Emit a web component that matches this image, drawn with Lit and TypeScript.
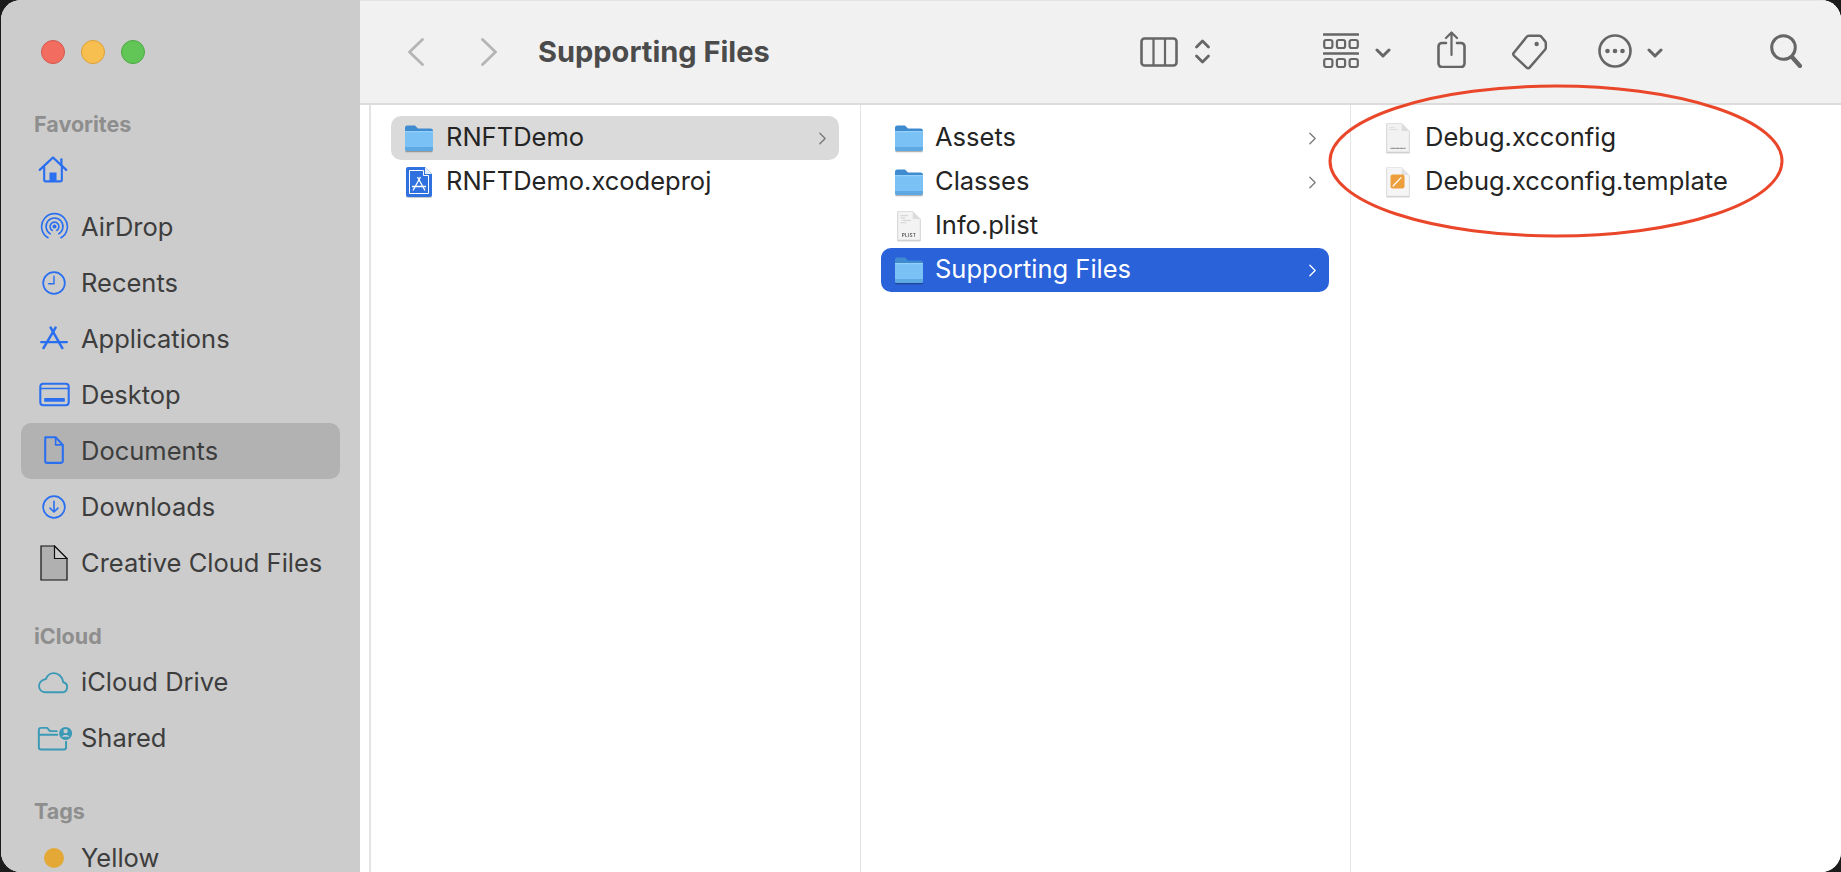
import { LitElement, html, css, svg } from "lit";
import { customElement } from "lit/decorators.js";

const sym = (body: unknown, vb: string, cls = "ic") => html`<svg class=${cls} viewBox=${vb} fill="none" stroke="currentColor" stroke-width="2.4" stroke-linecap="round" stroke-linejoin="round">${body}</svg>`;

const sideIcons: Record<string, unknown> = {
  home: sym(svg`<path d="M3 18 18 4l15 14" stroke-width="2.6"/><path d="M27.5 6v7" stroke-width="2.6"/><path d="M8 15v14.5a1.5 1.5 0 0 0 1.5 1.5h17a1.5 1.5 0 0 0 1.5-1.5V15" stroke-width="2.4"/><rect x="14" y="21" width="8" height="10" fill="currentColor" stroke="none"/>`, "0 0 36 34", "ic home"),
  airdrop: sym(svg`<circle cx="18" cy="18" r="2.5" fill="currentColor" stroke="none"/><path d="M15.25 22.8A5.5 5.5 0 1 1 20.75 22.8" stroke-width="2"/><path d="M12.75 27.1A10.5 10.5 0 1 1 23.25 27.1" stroke-width="2"/><path d="M10 31.9A16 16 0 1 1 26 31.9" stroke-width="2"/>`, "0 0 36 36", "ic airdrop"),
  clock: sym(svg`<circle cx="18" cy="18" r="15"/><path d="M18 8.5V19h-7.5" stroke-width="2"/>`, "0 0 36 36", "ic"),
  apps: sym(svg`<path d="M13.7 2 28.7 28.3" stroke-width="3.2"/><path d="M20 2 4.500 28.300" stroke-width="3.2"/><path d="M1.500 20.600h33" stroke-width="3"/>`, "0 0 36 32", "ic apps"),
  desktop: sym(svg`<rect x="1.5" y="1.5" width="33" height="25" rx="3.5"/><path d="M2 7h32" stroke-width="1.8"/><rect x="6" y="18" width="24" height="4.5" rx="1" fill="currentColor" stroke="none"/>`, "0 0 36 28", "ic desk"),
  doc: sym(svg`<path d="M4 1.5h13L26 11v20a2.5 2.5 0 0 1-2.5 2.5h-17A2.5 2.5 0 0 1 4 31V4a2.5 2.5 0 0 1 2.5-2.5z" stroke-width="2.6"/><path d="M17 2v9h8.5" stroke-width="2"/>`, "0 0 30 36", "ic docu"),
  down: sym(svg`<circle cx="18" cy="18" r="15"/><path d="M18 10v15M12.5 19.5 18 25l5.5-5.5" stroke-width="2.2"/>`, "0 0 36 36", "ic"),
  cloud: sym(svg`<path d="M10 25h19a6 6 0 0 0 1.500-11.800C29.500 6.500 24.500 2.500 19.500 2.500c-4.500 0-8 3-9.500 7C5.500 10 2 13.500 2 17.500 2 22 5.500 25 10 25z" stroke-width="2.200"/>`, "0 0 38 27", "ic cloud"),
  shared: sym(svg`<path d="M2 10V4.500A2.500 2.500 0 0 1 4.500 2H11l3 3.500h7.500M2 9.500h20M2 9.500V23a2.500 2.500 0 0 0 2.500 2.500H29a2.500 2.500 0 0 0 2.500-2.500v-6" stroke-width="2.100"/><circle cx="31" cy="8" r="7" fill="currentColor" stroke="none"/><circle cx="31" cy="5.500" r="2.400" fill="#ccc" stroke="none"/><path d="M26.800 11.500c1-2.300 7.400-2.300 8.400 0z" fill="#ccc" stroke="none"/>`, "0 0 39 27", "ic shared"),
  generic: html`<svg class="ic gen" viewBox="0 0 28 36"><path d="M1 1h13.500L27 13.500V35H1z" fill="#b0b0b0" stroke="#111" stroke-width="1.200"/><path d="M14.500 1v12.500H27z" fill="#ccc" stroke="#111" stroke-width="1.200"/></svg>`,
  dot: html`<span class="dot"></span>`,
};

const folder = html`<svg class="fi folder" viewBox="0 0 30 30">
  <path d="M1 5a2.500 2.500 0 0 1 2.500-2.500h7.500l3 3h12.500A2.500 2.500 0 0 1 29 8v6H1z" fill="#3f8bd0"/>
  <path d="M1 8.500h28V26a2 2 0 0 1-2 2H3a2 2 0 0 1-2-2z" fill="#7ac1f6"/>
  <path d="M1 24h28v2a2 2 0 0 1-2 2H3a2 2 0 0 1-2-2z" fill="#5ea9e2"/>
  <path d="M1 8h28v1.200H1z" fill="#94d0fa"/>
  <path d="M1.500 28.800h27" stroke="#000" stroke-opacity=".18" stroke-width="1"/>
</svg>`;

const xcode = html`<svg class="fi" viewBox="0 0 28 30">
  <path d="M3 0h17l7 7v21a2 2 0 0 1-2 2H3a2 2 0 0 1-2-2V2a2 2 0 0 1 2-2z" fill="#2f71de"/>
  <path d="M20 0l7 7h-7z" fill="#e3eefb"/>
  <path d="M4.500 3.500h14v5h5v18h-19z" fill="none" stroke="#fff" stroke-width="1"/>
  <path d="M12.500 10 20 23.500M15.500 10 8 23.500M7 19.500h14" stroke="#fff" stroke-width="1.300" fill="none"/>
</svg>`;

const plist = html`<svg class="fi" viewBox="0 0 26 32">
  <path d="M1 .5h16l8 8V31H1z" fill="#f3f3f3" stroke="#d4d4d4" stroke-width=".8"/>
  <path d="M17 .5v8h8z" fill="#dcdcdc"/>
  <path d="M4 5h8M4 7.500h5M6 10h9M4 12.500h6" stroke="#cfcfcf" stroke-width="1"/>
  <text x="13" y="28" font-size="5" font-family="Inter,sans-serif" font-weight="600" fill="#555" text-anchor="middle" letter-spacing=".3">PLIST</text>
</svg>`;

const xcconfig = html`<svg class="fi" viewBox="0 0 26 32">
  <path d="M1 .5h16l8 8V31H1z" fill="#f2f2f2" stroke="#d6d6d6" stroke-width=".8"/>
  <path d="M17 .5v8h8z" fill="#dcdcdc"/>
  <path d="M3.500 5h6M3.500 7h9" stroke="#dcdcdc" stroke-width="1"/>
  <path d="M5 27h16" stroke="#7b7b7b" stroke-width="1.300" stroke-dasharray="1 .4"/>
</svg>`;

const pages = html`<svg class="fi" viewBox="0 0 26 32">
  <path d="M1 .5h16l8 8V31H1z" fill="#f5f5f5" stroke="#dedede" stroke-width=".8"/>
  <path d="M17 .5v8h8z" fill="#e2e2e2"/>
  <rect x="5" y="8" width="15" height="15" rx="2.500" fill="#ee9f3d"/>
  <path d="M7.500 20.500 16.500 11" stroke="#fff" stroke-width="1.300"/>
</svg>`;

const chev = html`<svg class="chev" viewBox="0 0 8 14" fill="none" stroke="currentColor" stroke-width="1.500" stroke-linecap="round" stroke-linejoin="round"><path d="M1 1l6 6-6 6"/></svg>`;

const tb = (body: unknown, cls: string, vb: string) => html`<svg class=${cls} viewBox=${vb} fill="none" stroke="#666" stroke-width="2.600" stroke-linecap="round" stroke-linejoin="round">${body}</svg>`;

type Row = { icon: string; label: string };
const sections: { title: string; rows: Row[] }[] = [
  { title: "Favorites", rows: [
    { icon: "home", label: "" }, { icon: "airdrop", label: "AirDrop" }, { icon: "clock", label: "Recents" },
    { icon: "apps", label: "Applications" }, { icon: "desktop", label: "Desktop" }, { icon: "doc", label: "Documents" },
    { icon: "down", label: "Downloads" }, { icon: "generic", label: "Creative Cloud Files" } ] },
  { title: "iCloud", rows: [ { icon: "cloud", label: "iCloud Drive" }, { icon: "shared", label: "Shared" } ] },
  { title: "Tags", rows: [ { icon: "dot", label: "Yellow" } ] },
];

type FileRow = { icon: unknown; label: string; arrow?: boolean; state?: string };
const columns: FileRow[][] = [
  [ { icon: folder, label: "RNFTDemo", arrow: true, state: "inactive" }, { icon: xcode, label: "RNFTDemo.xcodeproj" } ],
  [ { icon: folder, label: "Assets", arrow: true }, { icon: folder, label: "Classes", arrow: true },
    { icon: plist, label: "Info.plist" }, { icon: folder, label: "Supporting Files", arrow: true, state: "active" } ],
  [ { icon: xcconfig, label: "Debug.xcconfig" }, { icon: pages, label: "Debug.xcconfig.template" } ],
];

@customElement("app-root")
export class AppRoot extends LitElement {
  static styles = css`
    :host { display: block; width: 1841px; height: 872px; background: #1c1c1c; overflow: hidden; font-family: Inter, "Liberation Sans", sans-serif; }
    .win { position: relative; margin-left: 1px; width: 1840px; height: 872px; background: #fff; border-radius: 20px; overflow: hidden; display: flex; }
    .side { width: 359px; flex: none; background: #ccc; display: flex; flex-direction: column; overflow: hidden; }
    .lights { height: 104px; flex: none; display: flex; align-items: center; gap: 16px; padding-left: 40px; box-sizing: border-box; }
    .light { width: 24px; height: 24px; border-radius: 50%; box-sizing: border-box; border: 1px solid; }
    .red { background: #f26d60; border-color: #d2574b; }
    .yellow { background: #f7bf4f; border-color: #dc9f38; }
    .green { background: #61c655; border-color: #4ca843; }
    .sec { flex: none; }
    .sec + .sec { margin-top: 25px; }
    .head { height: 38.5px; line-height: 40px; padding-left: 33px; font-size: 21.5px; font-weight: 700; color: #8e8e8e; }
    .srow { height: 56px; display: flex; align-items: center; margin: 0 20px; border-radius: 10px; color: #3d3d3d; font-size: 25.5px; box-sizing: border-box; }
    .srow.sel { background: #b2b2b2; }
    .slabel { white-space: nowrap; line-height: 26px; }
    .sicon { width: 66px; margin-right: -6px; flex: none; display: flex; align-items: center; justify-content: center; color: #2a6ff0; }
    .teal { color: #3a9ab6; }
    .ic { width: 26px; height: 26px; }
    .home { width: 32px; height: 30px; margin: -3px 2px 0 0; }
    .airdrop { width: 29px; height: 29px; }
    .apps { width: 28px; height: 25px; }
    .desk { width: 31px; height: 25px; }
    .docu { width: 24px; height: 29px; }
    .gen { width: 28px; height: 36px; }
    .cloud { width: 33px; height: 23px; margin-left: -1px; }
    .shared { width: 36px; height: 25px; margin-left: 1px; }
    .dot { width: 20px; height: 20px; border-radius: 50%; background: #e4a836; }
    .main { flex: 1; min-width: 0; display: flex; flex-direction: column; background: #fff; }
    .bar { height: 105px; flex: none; box-sizing: border-box; background: #f1f1f1; border-bottom: 2px solid #dcdcdc; border-top: 1px solid #e4e4e4; display: flex; align-items: center; padding-right: 39px; }
    .nav { width: 16px; height: 28px; flex: none; }
    .back { margin-left: 48px; }
    .fwd { margin-left: 57px; }
    .title { margin-left: 41px; font-size: 29px; font-weight: 700; color: #4b4b4b; white-space: nowrap; padding-bottom: 2px; }
    .tools { margin-left: auto; display: flex; align-items: center; }
    .tools svg { flex: none; display: block; }
    .t-col { width: 38px; height: 30px; }
    .t-sort { width: 17px; height: 25px; margin-left: 16px; margin-bottom: 1px; }
    .t-grp { width: 36px; height: 35px; margin-left: 112px; margin-bottom: 4px; }
    .t-dn { width: 16px; height: 10px; margin-left: 16px; margin-top: 1px; }
    .t-share { width: 29px; height: 37px; margin-left: 46px; margin-bottom: 6px; }
    .t-tag { width: 36px; height: 38px; margin-left: 46px; margin-bottom: 1px; }
    .t-more { width: 34px; height: 34px; margin-left: 50px; margin-bottom: 3px; }
    .t-dn2 { margin-left: 15px; width: 16px; height: 10px; margin-top: 1px; }
    .t-find { width: 32px; height: 34px; margin-left: 107px; margin-bottom: 3px; }
    .cols { flex: 1; min-height: 0; display: flex; padding-left: 9px; }
    .col { flex: none; box-sizing: border-box; border-left: 2px solid #e4e4e4; padding: 11px 21px 0 20px; display: flex; flex-direction: column; }
    .c1 { width: 491px; }
    .c2 { width: 490px; border-left-width: 1px; }
    .c3 { width: 491px; border-left-width: 1px; padding-left: 19px; }
    .row { height: 44px; flex: none; display: flex; align-items: center; border-radius: 10px; padding: 0 13px 0 14px; font-size: 25.5px; color: #242424; }
    .row.inactive { background: #dadada; }
    .row.active { background: #2a62da; color: #fff; }
    .fi { width: 28px; height: 30px; flex: none; margin-right: 13px; filter: drop-shadow(0 1px .5px rgba(0,0,0,.2)); }
    .folder { width: 30px; margin-left: -1px; margin-right: 12px; }
    .c2 .fi { margin-right: 12px; }
    .c2 .folder { margin-right: 11px; }
    .fn { flex: 1; white-space: nowrap; padding-bottom: 4px; }
    .chev { width: 7px; height: 13px; color: #777; flex: none; }
    .active .chev { color: #fff; }
    .ring { position: absolute; left: 1327px; top: 84px; width: 456px; height: 154px; pointer-events: none; }
  `;

  render() {
    return html`<div class="win">
      <aside class="side">
        <div class="lights"><span class="light red"></span><span class="light yellow"></span><span class="light green"></span></div>
        ${sections.map((s) => html`<div class="sec">
          <div class="head">${s.title}</div>
          ${s.rows.map((r) => html`<div class="srow ${r.label === "Documents" ? "sel" : ""}">
            <span class="sicon ${r.icon === "cloud" || r.icon === "shared" ? "teal" : ""}">${sideIcons[r.icon]}</span>
            <span class="slabel">${r.label}</span>
          </div>`)}
        </div>`)}
      </aside>
      <main class="main">
        <header class="bar">
          <svg class="nav back" viewBox="0 0 16 28" fill="none" stroke="#b5b5b5" stroke-width="2.800" stroke-linecap="round" stroke-linejoin="round"><path d="M14.500 1.500 1.500 14l13 12.500"/></svg>
          <svg class="nav fwd" viewBox="0 0 16 28" fill="none" stroke="#b5b5b5" stroke-width="2.800" stroke-linecap="round" stroke-linejoin="round"><path d="M1.500 1.500 14.500 14l-13 12.500"/></svg>
          <span class="title">Supporting Files</span>
          <div class="tools">
            ${tb(svg`<rect x="1.500" y="1.500" width="35" height="27" rx="3"/><path d="M13.500 2v26M25 2v26" stroke-width="2.200"/>`, "t-col", "0 0 38 30")}
            ${tb(svg`<path d="M2.500 8 8.500 2l6 6M2.500 17l6 6 6-6" stroke-width="2.800"/>`, "t-sort", "0 0 17 25")}
            ${tb(svg`<path d="M1 1.500h34M1 20.500h34" stroke-width="2.600"/><rect x="1.200" y="7" width="8.200" height="8" rx="2" stroke-width="2.200"/><rect x="13.900" y="7" width="8.200" height="8" rx="2" stroke-width="2.200"/><rect x="26.600" y="7" width="8.200" height="8" rx="2" stroke-width="2.200"/><rect x="1.200" y="26" width="8.200" height="8" rx="2" stroke-width="2.200"/><rect x="13.900" y="26" width="8.200" height="8" rx="2" stroke-width="2.200"/><rect x="26.600" y="26" width="8.200" height="8" rx="2" stroke-width="2.200"/>`, "t-grp", "0 0 36 35")}
            ${tb(svg`<path d="M2 2l6 6 6-6" stroke-width="3"/>`, "t-dn", "0 0 16 10")}
            ${tb(svg`<path d="M9 12H5a3.500 3.500 0 0 0-3.500 3.500v17A3.500 3.500 0 0 0 5 36h19a3.500 3.500 0 0 0 3.500-3.500v-17A3.500 3.500 0 0 0 24 12h-4"/><path d="M14.500 24V2M9 7l5.500-5.500L20 7" stroke-width="2.200"/>`, "t-share", "0 0 29 37")}
            ${tb(svg`<path d="M2.200 19.500 15.500 3a3 3 0 0 1 2.300-1.200h11a3 3 0 0 1 2.200 1l4 5a3 3 0 0 1 .7 2v4.500a3 3 0 0 1-.7 2L18.500 35.500a2 2 0 0 1-3 0L2.200 23a2.500 2.500 0 0 1 0-3.500z"/><circle cx="26" cy="10.500" r="2.300" fill="#666" stroke="none"/>`, "t-tag", "0 0 38 38")}
            ${tb(svg`<circle cx="17" cy="17" r="15.500"/><circle cx="9.500" cy="17" r="2.300" fill="#666" stroke="none"/><circle cx="17" cy="17" r="2.300" fill="#666" stroke="none"/><circle cx="24.500" cy="17" r="2.300" fill="#666" stroke="none"/>`, "t-more", "0 0 34 34")}
            ${tb(svg`<path d="M2 2l6 6 6-6" stroke-width="3"/>`, "t-dn2", "0 0 16 10")}
            ${tb(svg`<circle cx="13.500" cy="13.500" r="11.800" stroke-width="3"/><path d="M22 23l8 9" stroke-width="4.200"/>`, "t-find", "0 0 32 34")}
          </div>
        </header>
        <div class="cols">
          ${columns.map((c, i) => html`<section class="col c${i + 1}">
            ${c.map((r) => html`<div class="row ${r.state ?? ""}">${r.icon}<span class="fn">${r.label}</span>${r.arrow ? chev : ""}</div>`)}
          </section>`)}
        </div>
      </main>
      <svg class="ring" viewBox="0 0 456 154" fill="none"><ellipse cx="228" cy="77" rx="226" ry="75" stroke="#e9462a" stroke-width="3"/></svg>
    </div>`;
  }
}
